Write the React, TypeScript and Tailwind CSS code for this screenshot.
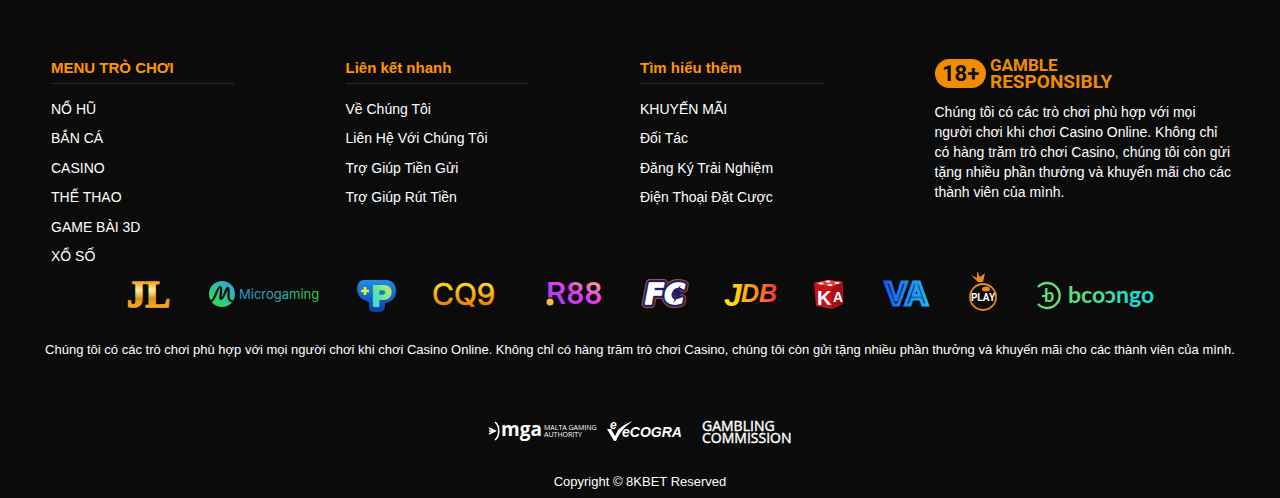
type LinkColumn = {
  title: string;
  links: string[];
};

const columns: LinkColumn[] = [
  {
    title: "MENU TRÒ CHƠI",
    links: ["NỔ HŨ", "BẮN CÁ", "CASINO", "THỂ THAO", "GAME BÀI 3D", "XỔ SỐ"],
  },
  {
    title: "Liên kết nhanh",
    links: [
      "Về Chúng Tôi",
      "Liên Hệ Với Chúng Tôi",
      "Trợ Giúp Tiền Gửi",
      "Trợ Giúp Rút Tiền",
    ],
  },
  {
    title: "Tìm hiểu thêm",
    links: ["KHUYẾN MÃI", "Đối Tác", "Đăng Ký Trải Nghiệm", "Điện Thoại Đặt Cược"],
  },
];

const about =
  "Chúng tôi có các trò chơi phù hợp với mọi người chơi khi chơi Casino Online. Không chỉ có hàng trăm trò chơi Casino, chúng tôi còn gửi tặng nhiều phần thưởng và khuyến mãi cho các thành viên của mình.";

const GambleResponsibly = () => {
  return (
    <svg width="180" height="34" viewBox="0 0 180 34" className="overflow-visible" role="img" aria-label="18+ Gamble Responsibly">
      <rect x="0" y="1" width="51" height="29" rx="14.5" fill="#f08c00" />
      <text x="7" y="23" fontFamily="Roboto, sans-serif" fontWeight="700" fontSize="22" fill="#0b0b0b">
        18+
      </text>
      <g fontFamily="Roboto, sans-serif" fontWeight="700" fill="#f08c00">
        <text x="55" y="13" fontSize="17">GAMBLE</text>
        <text x="55" y="30" fontSize="19">RESPONSIBLY</text>
      </g>
    </svg>
  );
};

const JiliLogo = () => {
  return (
    <svg width="83" height="42" viewBox="0 0 83 42" role="img" aria-label="JL">
      <defs>
        <linearGradient id="jl" x1="0" y1="0" x2="0" y2="1">
          <stop offset="0.2" stopColor="#f0a81c" />
          <stop offset="0.4" stopColor="#fff0a0" />
          <stop offset="0.6" stopColor="#d9921a" />
          <stop offset="0.85" stopColor="#ffb21c" />
        </linearGradient>
      </defs>
      <text x="21" y="36" fontFamily="Liberation Serif, serif" fontWeight="700" fontSize="37" fill="url(#jl)" stroke="url(#jl)" strokeWidth="1.6">
        JL
      </text>
    </svg>
  );
};

const MicrogamingLogo = () => {
  return (
    <svg width="149" height="42" viewBox="0 0 149 42" className="overflow-visible" role="img" aria-label="Microgaming">
      <defs>
        <linearGradient id="mgMark" x1="1" y1="0" x2="0.2" y2="1">
          <stop offset="0" stopColor="#2b9ff0" />
          <stop offset="1" stopColor="#2fe04a" />
        </linearGradient>
        <linearGradient id="mgText" x1="0" y1="0" x2="1" y2="0">
          <stop offset="0" stopColor="#2f92dc" />
          <stop offset="0.6" stopColor="#2bb09a" />
          <stop offset="1" stopColor="#22d52e" />
        </linearGradient>
      </defs>
      <circle cx="33" cy="23" r="13" fill="url(#mgMark)" />
      <path d="M22 30C26 30 28 16 31 16C34 16 30 28 32 28C35 28 37 16 39 17C41 18 37 30 43 30" fill="none" stroke="#0b0b0b" strokeWidth="2.2" strokeLinecap="round" />
      <text x="50" y="28" fontFamily="Inter, sans-serif" fontSize="13" fill="url(#mgText)">
        Microgaming
      </text>
    </svg>
  );
};

const PlusPLogo = () => {
  return (
    <svg width="77" height="42" viewBox="0 0 77 42" className="overflow-visible" role="img" aria-label="P">
      <defs>
        <linearGradient id="ppBody" x1="0" y1="0" x2="0" y2="1">
          <stop offset="0" stopColor="#1f8ee8" />
          <stop offset="1" stopColor="#0a3fa8" />
        </linearGradient>
        <linearGradient id="ppLetter" x1="1" y1="0" x2="0" y2="1">
          <stop offset="0" stopColor="#d8f53a" />
          <stop offset="0.5" stopColor="#6fe59a" />
          <stop offset="1" stopColor="#2fd0f0" />
        </linearGradient>
      </defs>
      <path d="M26 9H48C55 9 58 14 58 20C58 27 54 31 47 32V36C47 39 44 41 40 41H36C33 41 31 39 31 36V32C29 29 26 30 23 27C17 22 18 9 26 9Z" fill="url(#ppBody)" />
      <path d="M27 16V24M23 20H31" stroke="#d8f53a" strokeWidth="2.6" />
      <text x="34" y="35" fontFamily="Liberation Sans, sans-serif" fontWeight="700" fontSize="29" fill="url(#ppLetter)" stroke="url(#ppLetter)" strokeWidth="2" strokeLinejoin="round">
        P
      </text>
    </svg>
  );
};

const Cq9Logo = () => {
  return (
    <svg width="106" height="42" viewBox="0 0 106 42" role="img" aria-label="CQ9">
      <defs>
        <linearGradient id="cq" x1="0" y1="0" x2="0" y2="1">
          <stop offset="0.3" stopColor="#ffd21a" />
          <stop offset="0.85" stopColor="#ee7a0a" />
        </linearGradient>
      </defs>
      <text x="17" y="34" fontFamily="Inter, sans-serif" fontSize="30" fill="url(#cq)" stroke="url(#cq)" strokeWidth="0.6">
        CQ9
      </text>
    </svg>
  );
};

const R88Logo = () => {
  return (
    <svg width="101" height="42" viewBox="0 0 101 42" role="img" aria-label="R88">
      <defs>
        <linearGradient id="r88" x1="0.2" y1="1" x2="0.9" y2="0">
          <stop offset="0" stopColor="#8a3cf5" />
          <stop offset="0.5" stopColor="#e03cf0" />
          <stop offset="1" stopColor="#ffc070" />
        </linearGradient>
      </defs>
      <text x="25" y="33" fontFamily="Roboto, sans-serif" fontWeight="500" fontSize="32" fill="url(#r88)">
        R88
      </text>
      <circle cx="29" cy="31" r="4.5" fill="#0b0b0b" />
      <circle cx="29" cy="31" r="3.5" fill="#ffb838" />
    </svg>
  );
};

const FcLogo = () => {
  return (
    <svg width="86" height="42" viewBox="0 0 86 42" role="img" aria-label="FC">
      <text x="23" y="33" fontFamily="DejaVu Sans, sans-serif" fontWeight="700" fontStyle="italic" fontSize="28" fill="#b0501c" stroke="#b0501c" strokeWidth="8" strokeLinejoin="round">
        FC
      </text>
      <text x="23" y="33" fontFamily="DejaVu Sans, sans-serif" fontWeight="700" fontStyle="italic" fontSize="28" fill="#1b1f6e" stroke="#1b1f6e" strokeWidth="6" strokeLinejoin="round" aria-hidden="true">
        FC
      </text>
      <text x="23" y="33" fontFamily="DejaVu Sans, sans-serif" fontWeight="700" fontStyle="italic" fontSize="28" fill="#ffffff" stroke="#ffffff" strokeWidth="1.6" strokeLinejoin="round" aria-hidden="true">
        FC
      </text>
      <path d="M59 14L49 24H54L51 32L61 21H56Z" fill="#1b1f6e" />
    </svg>
  );
};

const JdbLogo = () => {
  return (
    <svg width="86" height="42" viewBox="0 0 86 42" className="overflow-visible" role="img" aria-label="JDB">
      <defs>
        <linearGradient id="jdb" x1="0" y1="0" x2="1" y2="0">
          <stop offset="0.1" stopColor="#ffe600" />
          <stop offset="0.55" stopColor="#ff9a1a" />
          <stop offset="1" stopColor="#f5343c" />
        </linearGradient>
      </defs>
      <text x="16" y="35" fontFamily="Liberation Sans, sans-serif" fontWeight="700" fontStyle="italic" fontSize="32" fill="url(#jdb)">
        J
        <tspan x="33" y="31" fontSize="25">DB</tspan>
      </text>
    </svg>
  );
};

const KaLogo = () => {
  return (
    <svg width="70" height="42" viewBox="0 0 70 42" role="img" aria-label="KA">
      <path d="M20 12L34 9L49 11L49 33L38 38L22 35Z" fill="#c4141c" />
      <path d="M20 12L34 9L49 11L38 16Z" fill="#e2403c" />
      <path d="M38 16L49 11V33L38 38Z" fill="#a80e16" />
      <g fill="#ffffff">
        <ellipse cx="27" cy="12.5" rx="2.5" ry="1" />
        <ellipse cx="34" cy="10.5" rx="2.5" ry="1" />
        <ellipse cx="43" cy="12" rx="2.5" ry="1" />
        <ellipse cx="36" cy="14" rx="2.5" ry="1" />
      </g>
      <text x="23" y="34" fontFamily="Liberation Sans, sans-serif" fontWeight="700" fontSize="20" fill="#ffffff">
        K
        <tspan x="39" y="31" fontSize="14">A</tspan>
      </text>
    </svg>
  );
};

const VaLogo = () => {
  return (
    <svg width="85" height="42" viewBox="0 0 85 42" role="img" aria-label="VA">
      <defs>
        <linearGradient id="va" x1="0" y1="0" x2="1" y2="0">
          <stop offset="0" stopColor="#1a5cf0" />
          <stop offset="1" stopColor="#1cb8f5" />
        </linearGradient>
      </defs>
      <text x="21" y="34" fontFamily="Liberation Sans, sans-serif" fontWeight="700" fontSize="33" fill="#0b1c40" stroke="url(#va)" strokeWidth="3">
        VA
      </text>
    </svg>
  );
};

const PlayLogo = () => {
  return (
    <svg width="68" height="42" viewBox="0 0 68 42" role="img" aria-label="PLAY">
      <path d="M29 11L22 4L28 7L28 0L31 6L36 2L34 11Z" fill="#e88a1c" />
      <circle cx="34" cy="26" r="13" fill="#0b0b0b" stroke="#e88a1c" strokeWidth="1.8" />
      <ellipse cx="37" cy="18" rx="4" ry="2.5" fill="#e88a1c" />
      <text x="34" y="30" textAnchor="middle" fontFamily="Roboto, sans-serif" fontWeight="700" fontSize="10" fill="#ffffff">
        PLAY
      </text>
    </svg>
  );
};

const BooongoLogo = () => {
  return (
    <svg width="157" height="42" viewBox="0 0 157 42" role="img" aria-label="Booongo">
      <defs>
        <linearGradient id="bng" x1="0" y1="0" x2="1" y2="0">
          <stop offset="0" stopColor="#62dd7c" />
          <stop offset="0.4" stopColor="#4ade90" />
          <stop offset="0.65" stopColor="#1fe0c8" />
          <stop offset="1" stopColor="#10e0d8" />
        </linearGradient>
      </defs>
      <path d="M21 16A12.5 12.5 0 1 1 21 33" fill="none" stroke="#62dd7c" strokeWidth="2.4" />
      <path d="M25 25H30" stroke="#62dd7c" strokeWidth="2" />
      <text x="27" y="31" fontFamily="Lato, sans-serif" fontWeight="700" fontSize="18" fill="#62dd7c">
        b
      </text>
      <text x="51" y="32" fontFamily="Lato, sans-serif" fontWeight="700" fontSize="23" fill="url(#bng)">
        bcoɔngo
      </text>
    </svg>
  );
};

const MgaLogo = () => {
  return (
    <svg width="107" height="30" viewBox="0 0 107 30" className="overflow-visible" role="img" aria-label="MGA Malta Gaming Authority">
      <path d="M2 11L8 14L2 17M2 14H9M8 5C13 9 13 19 8 23" fill="none" stroke="#ffffff" strokeWidth="1.6" />
      <g fontFamily="Open Sans, sans-serif" fill="#ffffff">
        <text x="14" y="19" fontWeight="700" fontSize="19">mga</text>
        <text x="57" y="13" fontSize="7">MALTA GAMING</text>
        <text x="57" y="20" fontSize="7">AUTHORITY</text>
      </g>
    </svg>
  );
};

const EcograLogo = () => {
  return (
    <svg width="84" height="30" viewBox="0 0 84 30" role="img" aria-label="eCOGRA">
      <path d="M1 12L5 12L9 19L12 13C16 9 21 6 27 4C19 9 14 15 10 24H8Z" fill="#ffffff" />
      <g fontWeight="700" fontStyle="italic" fill="#ffffff">
        <text x="4" y="12" fontFamily="Liberation Sans, sans-serif" fontSize="12">e</text>
        <text x="16" y="20" fontFamily="Liberation Sans, sans-serif" fontSize="14">eCOGRA</text>
      </g>
    </svg>
  );
};

const GamblingCommissionLogo = () => {
  return (
    <svg width="91" height="30" viewBox="0 0 91 30" className="overflow-visible" role="img" aria-label="Gambling Commission">
      <g fontFamily="Open Sans, sans-serif" fontSize="14" fill="#ffffff" stroke="#ffffff" strokeWidth="0.4">
        <text x="0" y="14">GAMBLING</text>
        <text x="0" y="26">COMMISSION</text>
      </g>
    </svg>
  );
};

function App() {
  return (
    <footer className="min-h-screen bg-[#0b0b0b] pt-[58px] pb-[6px] font-['Liberation_Sans',Arial,sans-serif] text-white">
      <div className="grid grid-cols-2 px-[51px] lg:grid-cols-4">
        {columns.map((c) => {
          return (
            <div key={c.title}>
              <h3 className="w-[62%] border-b border-[#2a2a2a] pb-[5px] text-[15px] leading-5 font-bold text-[#ff9600]">
                {c.title}
              </h3>
              <ul className="mt-[10px] grid h-[177px] grid-rows-6 items-center text-sm">
                {c.links.map((l) => {
                  return (
                    <li key={l}>
                      <a href="#" className="hover:text-[#ff9600]">
                        {l}
                      </a>
                    </li>
                  );
                })}
              </ul>
            </div>
          );
        })}
        <div className="-mr-1">
          <GambleResponsibly></GambleResponsibly>
          <p className="mt-[10px] text-sm leading-5">{about}</p>
        </div>
      </div>

      <div className="flex flex-wrap items-center justify-center">
        <JiliLogo></JiliLogo>
        <MicrogamingLogo></MicrogamingLogo>
        <PlusPLogo></PlusPLogo>
        <Cq9Logo></Cq9Logo>
        <R88Logo></R88Logo>
        <FcLogo></FcLogo>
        <JdbLogo></JdbLogo>
        <KaLogo></KaLogo>
        <VaLogo></VaLogo>
        <PlayLogo></PlayLogo>
        <BooongoLogo></BooongoLogo>
      </div>

      <p className="mt-[27px] px-8 text-center text-[13px] leading-5">{about}</p>

      <div className="mt-[57px] flex flex-wrap items-center justify-center gap-3">
        <MgaLogo></MgaLogo>
        <EcograLogo></EcograLogo>
        <GamblingCommissionLogo></GamblingCommissionLogo>
      </div>

      <p className="mt-[25px] text-center text-[13px] leading-5">
        Copyright © 8KBET Reserved
      </p>
    </footer>
  );
}

export default App;
